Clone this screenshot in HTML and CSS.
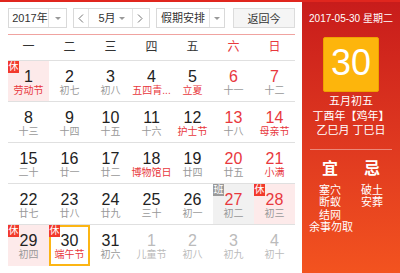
FILE: index.html
```html
<!DOCTYPE html>
<html lang="zh-CN">
<head>
    <meta charset="UTF-8">
    <title>万年历</title>
    <link rel="stylesheet" href="styles.css">
</head>
<body>
    <div class="calendar">
        <div class="main">
            <div class="toolbar">
                <div class="select year">
                    <span class="select-text">2017年</span>
                    <span class="select-arrow"><i class="caret"></i></span>
                </div>
                <div class="select month">
                    <span class="nav prev">
                        <svg width="6" height="9" viewBox="0 0 6 9"><polyline points="5,0.5 1,4.5 5,8.5" fill="none" stroke="#777" stroke-width="1"/></svg>
                    </span>
                    <span class="select-text">5月</span>
                    <span class="month-caret"><i class="caret"></i></span>
                    <span class="nav next">
                        <svg width="6" height="9" viewBox="0 0 6 9"><polyline points="1,0.5 5,4.5 1,8.5" fill="none" stroke="#777" stroke-width="1"/></svg>
                    </span>
                </div>
                <div class="select holiday">
                    <span class="select-text">假期安排</span>
                    <span class="select-arrow"><i class="caret"></i></span>
                </div>
                <button class="today-btn">返回今</button>
            </div>

            <div class="weekdays">
                <span>一</span><span>二</span><span>三</span><span>四</span><span>五</span>
                <span class="red">六</span><span class="red">日</span>
            </div>

            <div class="days">
                <div class="day rest"><i class="tag">休</i><span class="num">1</span><span class="lunar fest">劳动节</span></div>
                <div class="day"><span class="num">2</span><span class="lunar">初七</span></div>
                <div class="day"><span class="num">3</span><span class="lunar">初八</span></div>
                <div class="day"><span class="num">4</span><span class="lunar fest">五四青...</span></div>
                <div class="day"><span class="num">5</span><span class="lunar fest">立夏</span></div>
                <div class="day weekend"><span class="num">6</span><span class="lunar">十一</span></div>
                <div class="day weekend"><span class="num">7</span><span class="lunar">十二</span></div>

                <div class="day"><span class="num">8</span><span class="lunar">十三</span></div>
                <div class="day"><span class="num">9</span><span class="lunar">十四</span></div>
                <div class="day"><span class="num">10</span><span class="lunar">十五</span></div>
                <div class="day"><span class="num">11</span><span class="lunar">十六</span></div>
                <div class="day"><span class="num">12</span><span class="lunar fest">护士节</span></div>
                <div class="day weekend"><span class="num">13</span><span class="lunar">十八</span></div>
                <div class="day weekend"><span class="num">14</span><span class="lunar fest">母亲节</span></div>

                <div class="day"><span class="num">15</span><span class="lunar">二十</span></div>
                <div class="day"><span class="num">16</span><span class="lunar">廿一</span></div>
                <div class="day"><span class="num">17</span><span class="lunar">廿二</span></div>
                <div class="day"><span class="num">18</span><span class="lunar fest">博物馆日</span></div>
                <div class="day"><span class="num">19</span><span class="lunar">廿四</span></div>
                <div class="day weekend"><span class="num">20</span><span class="lunar">廿五</span></div>
                <div class="day weekend"><span class="num">21</span><span class="lunar fest">小满</span></div>

                <div class="day"><span class="num">22</span><span class="lunar">廿七</span></div>
                <div class="day"><span class="num">23</span><span class="lunar">廿八</span></div>
                <div class="day"><span class="num">24</span><span class="lunar">廿九</span></div>
                <div class="day"><span class="num">25</span><span class="lunar">三十</span></div>
                <div class="day"><span class="num">26</span><span class="lunar">初一</span></div>
                <div class="day weekend work"><i class="tag tag-work">班</i><span class="num">27</span><span class="lunar">初二</span></div>
                <div class="day weekend rest"><i class="tag">休</i><span class="num">28</span><span class="lunar">初三</span></div>

                <div class="day rest"><i class="tag">休</i><span class="num">29</span><span class="lunar">初四</span></div>
                <div class="day today"><i class="tag">休</i><span class="num">30</span><span class="lunar fest">端午节</span></div>
                <div class="day"><span class="num">31</span><span class="lunar">初六</span></div>
                <div class="day other"><span class="num">1</span><span class="lunar">儿童节</span></div>
                <div class="day other"><span class="num">2</span><span class="lunar">初八</span></div>
                <div class="day other"><span class="num">3</span><span class="lunar">初九</span></div>
                <div class="day other"><span class="num">4</span><span class="lunar">初十</span></div>
            </div>
        </div>

        <div class="side">
            <div class="side-date">2017-05-30 星期二</div>
            <div class="big-day">30</div>
            <div class="side-lunar">
                <p>五月初五</p>
                <p>丁酉年【鸡年】</p>
                <p>乙巳月 丁巳日</p>
            </div>
            <div class="side-divider"></div>
            <div class="almanac">
                <div class="almanac-col">
                    <h3>宜</h3>
                    <p>塞穴</p>
                    <p>断蚁</p>
                    <p>结网</p>
                    <p>余事勿取</p>
                </div>
                <div class="almanac-col">
                    <h3>忌</h3>
                    <p>破土</p>
                    <p>安葬</p>
                </div>
            </div>
        </div>
    </div>
</body>
</html>
```

FILE: styles.css
```css
* {
    margin: 0;
    padding: 0;
    box-sizing: border-box;
}

body {
    font-family: "Liberation Sans", "Noto Sans CJK SC", sans-serif;
    background: #fff;
    color: #333;
}

.calendar {
    display: flex;
    width: 400px;
    height: 273px;
    border-top: 2px solid #e0261e;
    overflow: hidden;
}

.main {
    width: 302px;
    padding: 6px 7px 0 8px;
}

/* toolbar */
.toolbar {
    display: flex;
    height: 20px;
    margin-bottom: 6px;
    font-size: 11px;
}

.select {
    display: flex;
    height: 20px;
    border: 1px solid #d9d9d9;
    background: #fff;
    line-height: 18px;
}

.select-text {
    text-align: center;
    white-space: nowrap;
}

.select-arrow {
    display: flex;
    align-items: center;
    justify-content: center;
    border-left: 1px solid #e3e3e3;
}

.caret {
    width: 0;
    height: 0;
    border-left: 3px solid transparent;
    border-right: 3px solid transparent;
    border-top: 3px solid #999;
}

.year {
    width: 59px;
}

.year .select-text {
    width: 39px;
    padding-left: 3px;
}

.year .select-arrow {
    width: 18px;
}

.month {
    width: 77px;
    margin-left: 6px;
}

.nav {
    display: flex;
    align-items: center;
    justify-content: center;
    width: 15px;
}

.prev {
    border-right: 1px solid #e3e3e3;
}

.next {
    border-left: 1px solid #e3e3e3;
}

.month .select-text {
    width: 30px;
    padding-left: 6px;
}

.month-caret {
    display: flex;
    align-items: center;
    width: 13px;
}

.holiday {
    width: 69px;
    margin-left: 6px;
}

.holiday .select-text {
    width: 52px;
}

.holiday .select-arrow {
    width: 15px;
}

.today-btn {
    width: 62px;
    height: 20px;
    margin-left: 8px;
    border: 1px solid #dcdcdc;
    background: #f5f5f5;
    color: #333;
    font-family: inherit;
    font-size: 11px;
}

/* grid */
.weekdays {
    display: grid;
    grid-template-columns: repeat(7, 41px);
    height: 27px;
    border-top: 1px solid #f0a3a0;
    border-bottom: 1px solid #e0e0e0;
    font-size: 12px;
    line-height: 25px;
    text-align: center;
    color: #333;
}

.weekdays .red {
    color: #e8383d;
}

.days {
    display: grid;
    grid-template-columns: repeat(7, 41px);
    grid-auto-rows: 41px;
}

.day {
    position: relative;
    display: flex;
    flex-direction: column;
    align-items: center;
    padding-top: 7px;
    border-bottom: 1px solid #e0e0e0;
}

.day:nth-last-child(-n+7) {
    border-bottom: none;
}

.num {
    font-size: 16px;
    line-height: 18px;
    color: #222;
}

.lunar {
    margin-top: -1px;
    font-size: 10px;
    line-height: 11px;
    color: #999;
    white-space: nowrap;
}

.weekend .num,
.lunar.fest {
    color: #e8383d;
}

.rest {
    background: #fdeaea;
}

.work {
    background: #f1f1f1;
}

.today {
    box-shadow: inset 0 0 0 2px #fcb514;
}

.other .num,
.other .lunar {
    color: #bbb;
}

.tag {
    position: absolute;
    top: 0;
    left: 0;
    width: 11px;
    height: 12px;
    background: #f2392c;
    color: #fff;
    font-style: normal;
    font-size: 10px;
    line-height: 12px;
    text-align: center;
}

.tag-work {
    background: #9a9a9a;
}

/* side panel */
.side {
    display: flex;
    flex-direction: column;
    align-items: center;
    width: 98px;
    background: linear-gradient(180deg, #c81c1b 0%, #e03a20 55%, #f3531f 100%);
    color: #fff;
    text-align: center;
}

.side-date {
    margin-top: 10px;
    font-size: 10px;
    line-height: 14px;
    white-space: nowrap;
}

.big-day {
    width: 56px;
    height: 55px;
    margin-top: 11px;
    background: #fdb50c;
    border: 1px solid #eea200;
    border-radius: 2px;
    font-size: 36px;
    line-height: 50px;
}

.side-lunar {
    margin-top: 2px;
    font-size: 11px;
    line-height: 14.5px;
    white-space: nowrap;
}

.side-divider {
    align-self: stretch;
    margin: 11px 8px 0;
    border-top: 1px solid rgba(255, 255, 255, 0.4);
}

.almanac {
    display: grid;
    grid-template-columns: 42px 42px;
    margin-top: 9px;
}

.almanac-col h3 {
    margin-bottom: 5px;
    font-size: 16px;
    line-height: 20px;
}

.almanac-col p {
    font-size: 11px;
    line-height: 12.5px;
    white-space: nowrap;
}
```
